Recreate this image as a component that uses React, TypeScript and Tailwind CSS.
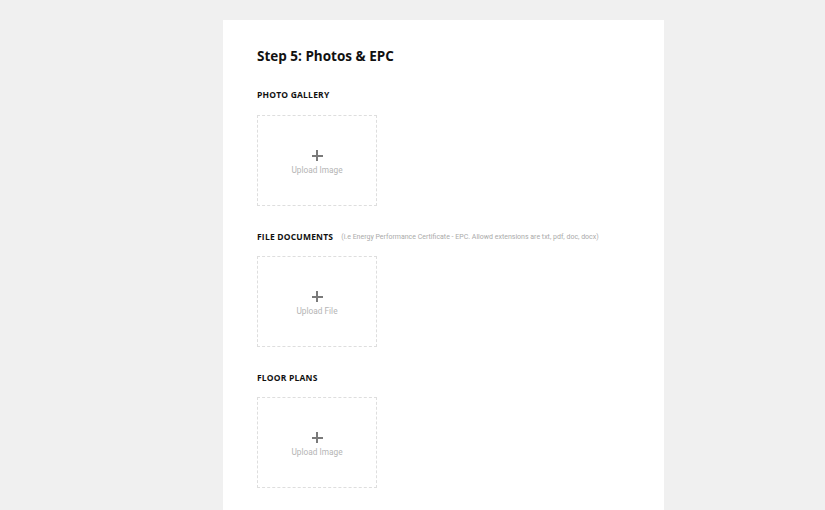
import React from "react";

function UploadBox({ label }: { label: string }) {
  return (
    <div className="w-[120px] h-[91px] border border-dashed border-[#dedede] flex flex-col items-center justify-center">
      <div className="relative w-[11px] h-[11px] mt-[4px]">
        <div className="absolute left-0 top-[5px] w-[11px] h-[2px] bg-[#7a7a7a]" />
        <div className="absolute left-[4.5px] top-0 w-[2px] h-[11px] bg-[#7a7a7a]" />
      </div>
      <div className="mt-[3px] text-[8.3px] leading-[12px] text-[#b5b5b5] font-['Roboto',sans-serif]">{label}</div>
    </div>
  );
}

function SectionTitle({ children }: { children: React.ReactNode }) {
  return (
    <div className="text-[8.5px] leading-[12px] font-bold tracking-[0.2px] text-[#111] font-['Open_Sans',sans-serif]">
      {children}
    </div>
  );
}

export default function App() {
  return (
    <div className="min-h-[510px] bg-[#f0f0f0] pt-[20px] pl-[223px]">
      <div className="w-[441px] bg-white px-[34px] pt-[26px] pb-[40px] min-h-[490px]">
        <h1 className="text-[13.5px] leading-[20px] font-bold text-[#111] font-['Open_Sans',sans-serif]">
          Step 5: Photos &amp; EPC
        </h1>
        <div className="mt-[23px]">
          <SectionTitle>PHOTO GALLERY</SectionTitle>
        </div>
        <div className="mt-[14px]">
          <UploadBox label="Upload Image" />
        </div>
        <div className="mt-[25px] flex items-center">
          <SectionTitle>FILE DOCUMENTS</SectionTitle>
          <span className="ml-[8px] text-[7px] leading-[12px] text-[#aaa] font-['Roboto',sans-serif]">
            (i.e Energy Performance Certificate - EPC. Allowd extensions are txt, pdf, doc, docx)
          </span>
        </div>
        <div className="mt-[13px]">
          <UploadBox label="Upload File" />
        </div>
        <div className="mt-[25px]">
          <SectionTitle>FLOOR PLANS</SectionTitle>
        </div>
        <div className="mt-[13px]">
          <UploadBox label="Upload Image" />
        </div>
      </div>
    </div>
  );
}
